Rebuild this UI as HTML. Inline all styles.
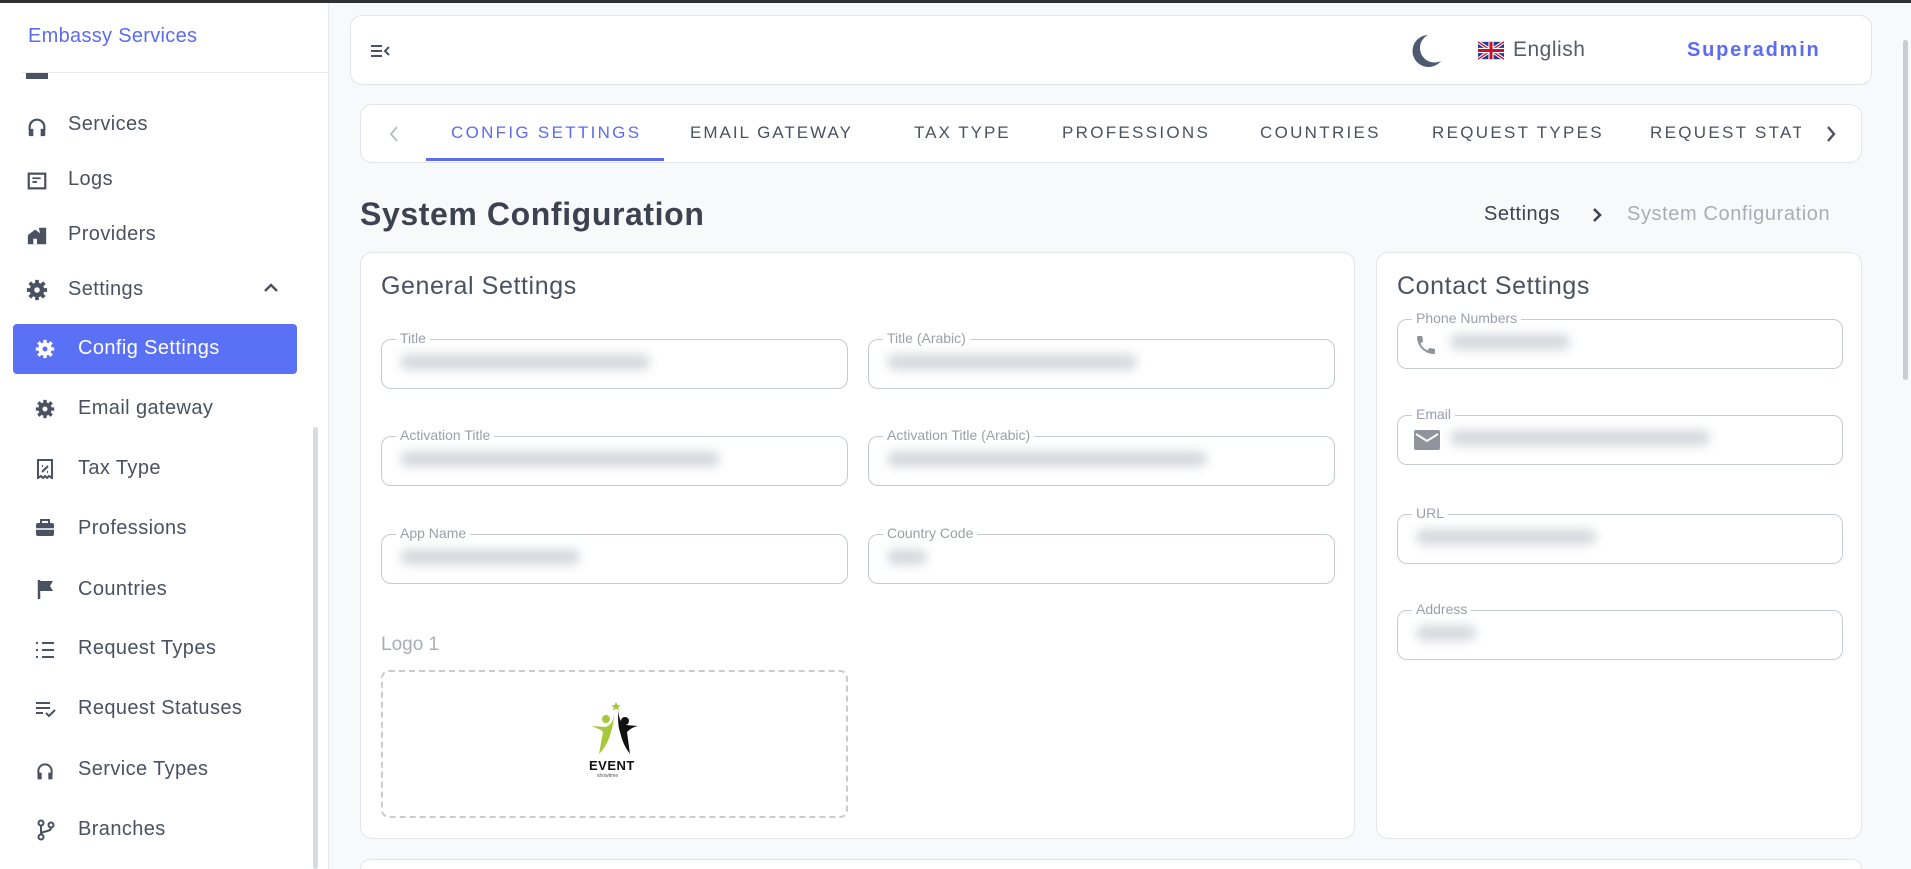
<!DOCTYPE html>
<html><head><meta charset="utf-8"><style>
*{box-sizing:border-box;margin:0;padding:0}
html{overflow:hidden;width:1911px;height:869px}
body{width:1911px;height:869px;overflow:hidden;background:#f8f9fb;font-family:"Liberation Sans",sans-serif;position:relative;color:#4a5160}
.a{position:absolute}
#top{left:0;top:0;width:1911px;height:3px;background:#2f3130}
#side{left:0;top:3px;width:329px;height:866px;background:#fff;border-right:1px solid #e6e8ec;overflow:hidden}
.brand{left:28px;top:24px;font-size:20px;color:#5b6cf0;letter-spacing:.3px}
.sep{left:22px;top:69px;width:306px;height:1px;background:#e6e8ec}
.it{font-size:20px;color:#4a5160;white-space:nowrap;letter-spacing:.4px}
.ic{width:22px;height:22px}
.card{background:#fff;border:1px solid #e3e5ea;border-radius:12px}
.tab{top:123px;font-size:17px;letter-spacing:2px;color:#4a5160;white-space:nowrap}
.fld{border:1px solid #c6cad2;border-radius:10px;height:50px}
.lbl{font-size:14px;color:#9a9fa8;background:#fff;padding:0 4px;top:-10px;left:14px}
.blur{top:14px;left:18px;height:16px;background:#d6d9de;border-radius:8px;filter:blur(5px)}
</style></head><body>
<div class="a" id="top"></div>
<div class="a" id="side">
 <div class="a brand" style="top:22px">Embassy Services</div>
 <div class="a" style="left:0;top:70px;width:329px;height:20px;overflow:hidden">
  <div class="a it" style="left:68px;top:-17px">Users</div>
  <div class="a" style="left:26px;top:-12px;width:22px;height:18px;background:#4a5160"></div>
 </div>
 <div class="a sep"></div>
 <svg class="a ic" style="left:26px;top:113px" viewBox="0 0 24 24"><path d="M4 15v-3a8 8 0 0116 0v3" fill="none" stroke="#4a5160" stroke-width="2.4"/><path d="M3 14h5v8H4a1 1 0 01-1-1zM21 14h-5v8h4a1 1 0 001-1z" fill="#4a5160"/></svg>
 <div class="a it" style="left:68px;top:110px">Services</div>
 <svg class="a ic" style="left:26px;top:167px" viewBox="0 0 24 24"><rect x="3" y="4" width="18" height="16" fill="none" stroke="#4a5160" stroke-width="2.4"/><path d="M7 9h9M7 13h5" stroke="#4a5160" stroke-width="2"/></svg>
 <div class="a it" style="left:68px;top:165px">Logs</div>
 <svg class="a ic" style="left:26px;top:222px" viewBox="0 0 24 24"><path d="M2 11l8-6 8 6v10H2zM14 3h8v18h-4" fill="#4a5160"/><rect x="8" y="15" width="4" height="6" fill="#fff"/></svg>
 <div class="a it" style="left:68px;top:220px">Providers</div>
 <svg class="a ic" style="left:26px;top:276px" viewBox="0 0 24 24"><circle cx="12" cy="12" r="8" fill="#4a5160"/><path d="M12 1v5M12 18v5M1 12h5M18 12h5M4 4l4 4M16 16l4 4M4 20l4-4M16 8l4-4" stroke="#4a5160" stroke-width="4"/><circle cx="12" cy="12" r="3" fill="#fff"/></svg>
 <div class="a it" style="left:68px;top:275px">Settings</div>
 <svg class="a" style="left:263px;top:279px" width="16" height="12" viewBox="0 0 16 12"><path d="M2 9l6-6 6 6" fill="none" stroke="#4a5160" stroke-width="2.4"/></svg>
 <div class="a" style="left:13px;top:321px;width:284px;height:50px;background:#5b71f5;border-radius:4px"></div>
 <svg class="a" style="left:35px;top:336px" width="20" height="20" viewBox="0 0 24 24"><circle cx="12" cy="12" r="8" fill="#fff"/><path d="M12 1v5M12 18v5M1 12h5M18 12h5M4 4l4 4M16 16l4 4M4 20l4-4M16 8l4-4" stroke="#fff" stroke-width="4"/><circle cx="12" cy="12" r="3" fill="#5b71f5"/></svg>
 <div class="a it" style="left:78px;top:334px;color:#fff">Config Settings</div>
 <svg class="a" style="left:35px;top:396px" width="20" height="20" viewBox="0 0 24 24"><circle cx="12" cy="12" r="8" fill="#4a5160"/><path d="M12 1v5M12 18v5M1 12h5M18 12h5M4 4l4 4M16 16l4 4M4 20l4-4M16 8l4-4" stroke="#4a5160" stroke-width="4"/><circle cx="12" cy="12" r="3" fill="#fff"/></svg>
 <div class="a it" style="left:78px;top:394px">Email gateway</div>
 <svg class="a" style="left:36px;top:456px" width="18" height="20" viewBox="0 0 18 20"><path d="M2 1h14v18l-3-2-2 2-2-2-2 2-2-2-3 2z" fill="none" stroke="#4a5160" stroke-width="2"/><path d="M6 13l6-6M6 7h1M11 13h1" stroke="#4a5160" stroke-width="2"/></svg>
 <div class="a it" style="left:78px;top:454px">Tax Type</div>
 <svg class="a" style="left:35px;top:516px" width="20" height="18" viewBox="0 0 20 18"><rect x="1" y="4" width="18" height="13" rx="2" fill="#4a5160"/><rect x="6" y="1" width="8" height="4" fill="none" stroke="#4a5160" stroke-width="2"/><path d="M1 10h18" stroke="#fff" stroke-width="1.5"/></svg>
 <div class="a it" style="left:78px;top:514px">Professions</div>
 <svg class="a" style="left:37px;top:576px" width="18" height="20" viewBox="0 0 18 20"><path d="M2 1v19" stroke="#4a5160" stroke-width="2.5"/><path d="M3 2h13l-3 5 3 5H3z" fill="#4a5160"/></svg>
 <div class="a it" style="left:78px;top:575px">Countries</div>
 <svg class="a" style="left:35px;top:637px" width="20" height="20" viewBox="0 0 20 20"><path d="M7 3h12M7 10h12M7 17h12" stroke="#4a5160" stroke-width="2"/><path d="M1 3h2M1 10h2M1 17h2" stroke="#4a5160" stroke-width="2"/></svg>
 <div class="a it" style="left:78px;top:634px">Request Types</div>
 <svg class="a" style="left:35px;top:697px" width="22" height="18" viewBox="0 0 22 18"><path d="M1 3h14M1 8h14M1 13h7" stroke="#4a5160" stroke-width="2"/><path d="M11 13l3 3 6-6" fill="none" stroke="#4a5160" stroke-width="2"/></svg>
 <div class="a it" style="left:78px;top:694px">Request Statuses</div>
 <svg class="a" style="left:35px;top:758px" width="20" height="20" viewBox="0 0 24 24"><path d="M4 15v-3a8 8 0 0116 0v3" fill="none" stroke="#4a5160" stroke-width="2.4"/><path d="M3 14h5v8H4a1 1 0 01-1-1zM21 14h-5v8h4a1 1 0 001-1z" fill="#4a5160"/></svg>
 <div class="a it" style="left:78px;top:755px">Service Types</div>
 <svg class="a" style="left:37px;top:816px" width="18" height="22" viewBox="0 0 18 22"><circle cx="4" cy="4" r="2.5" fill="none" stroke="#4a5160" stroke-width="2"/><circle cx="4" cy="18" r="2.5" fill="none" stroke="#4a5160" stroke-width="2"/><circle cx="14" cy="6" r="2.5" fill="none" stroke="#4a5160" stroke-width="2"/><path d="M4 7v8M14 9c0 4-10 3-10 6" fill="none" stroke="#4a5160" stroke-width="2"/></svg>
 <div class="a it" style="left:78px;top:815px">Branches</div>
 <div class="a" style="left:313px;top:424px;width:5px;height:442px;background:#d8dbe0;border-radius:3px"></div>
</div>
<div class="a" style="left:1903px;top:40px;width:5px;height:340px;background:#c9ccd2;border-radius:3px"></div>

<div class="a card" style="left:350px;top:15px;width:1522px;height:70px">
 <svg class="a" style="left:19px;top:27px" width="22" height="16" viewBox="0 0 22 16"><path d="M1 3h11M1 8h11M1 13h11" stroke="#4a5160" stroke-width="2"/><path d="M19 4l-4 4 4 4" fill="none" stroke="#4a5160" stroke-width="2"/></svg>
 <svg class="a" style="left:1059px;top:17px" width="34" height="36" viewBox="0 0 34 36"><path d="M18 2A16 16 0 1031 28 13 13 0 0118 2z" fill="#4f5a70"/></svg>
 <svg class="a" style="left:1127px;top:25px" width="26" height="19" viewBox="0 0 60 40"><rect width="60" height="40" fill="#223a8f"/><path d="M0 0L60 40M60 0L0 40" stroke="#fff" stroke-width="8"/><path d="M0 0L60 40M60 0L0 40" stroke="#c8102e" stroke-width="3"/><path d="M30 0v40M0 20h60" stroke="#fff" stroke-width="12"/><path d="M30 0v40M0 20h60" stroke="#c8102e" stroke-width="7"/></svg>
 <div class="a" style="left:1162px;top:22px;font-size:21px;color:#555c6a;letter-spacing:.5px">English</div>
 <div class="a" style="left:1336px;top:23px;font-size:20px;font-weight:bold;color:#5b6cf0;letter-spacing:1.8px">Superadmin</div>
</div>

<div class="a card" style="left:360px;top:104px;width:1502px;height:59px;overflow:hidden">
 <svg class="a" style="left:27px;top:20px" width="12" height="18" viewBox="0 0 12 18"><path d="M9 2L3 9l6 7" fill="none" stroke="#b9bdc5" stroke-width="2"/></svg>
 <div class="a" style="left:65px;top:53px;width:238px;height:3px;background:#5b6cf0"></div>
 <svg class="a" style="left:1464px;top:20px" width="12" height="18" viewBox="0 0 12 18"><path d="M3 2l6 7-6 7" fill="none" stroke="#4a5160" stroke-width="2.4"/></svg>
</div>
<div class="a tab" style="left:451px;color:#5b6cf0;letter-spacing:2.3px">CONFIG SETTINGS</div>
<div class="a tab" style="left:690px">EMAIL GATEWAY</div>
<div class="a tab" style="left:914px">TAX TYPE</div>
<div class="a tab" style="left:1062px;letter-spacing:2.3px">PROFESSIONS</div>
<div class="a tab" style="left:1260px;letter-spacing:2.3px">COUNTRIES</div>
<div class="a tab" style="left:1432px;letter-spacing:2.3px">REQUEST TYPES</div>
<div class="a tab" style="left:1650px;width:151px;overflow:hidden;letter-spacing:2.3px">REQUEST STATUSES</div>

<div class="a" style="left:360px;top:196px;font-size:32px;font-weight:bold;color:#3d4250;letter-spacing:.6px">System Configuration</div>
<div class="a" style="left:1484px;top:203px;font-size:20px;color:#3d4250;letter-spacing:.5px">Settings</div>
<svg class="a" style="left:1591px;top:207px" width="12" height="16" viewBox="0 0 12 16"><path d="M3 2l6 6-6 6" fill="none" stroke="#3d4250" stroke-width="2.6"/></svg>
<div class="a" style="left:1627px;top:203px;font-size:20px;color:#a9adb5;letter-spacing:.6px">System Configuration</div>

<div class="a card" style="left:360px;top:252px;width:995px;height:587px">
 <div class="a" style="left:20px;top:19px;font-size:25px;color:#4a5160;letter-spacing:.6px">General Settings</div>
 <div class="a fld" style="left:20px;top:86px;width:467px"><span class="a lbl">Title</span><div class="a blur" style="width:250px"></div></div>
 <div class="a fld" style="left:507px;top:86px;width:467px"><span class="a lbl">Title (Arabic)</span><div class="a blur" style="width:250px"></div></div>
 <div class="a fld" style="left:20px;top:183px;width:467px"><span class="a lbl">Activation Title</span><div class="a blur" style="width:320px"></div></div>
 <div class="a fld" style="left:507px;top:183px;width:467px"><span class="a lbl">Activation Title (Arabic)</span><div class="a blur" style="width:320px"></div></div>
 <div class="a fld" style="left:20px;top:281px;width:467px"><span class="a lbl">App Name</span><div class="a blur" style="width:180px"></div></div>
 <div class="a fld" style="left:507px;top:281px;width:467px"><span class="a lbl">Country Code</span><div class="a blur" style="width:40px"></div></div>
 <div class="a" style="left:20px;top:381px;font-size:19px;color:#a9adb5">Logo 1</div>
 <div class="a" style="left:20px;top:417px;width:467px;height:148px;border:2px dashed #c8cbd0;border-radius:8px">
  <svg class="a" style="left:207px;top:30px" width="52" height="56" viewBox="0 0 52 56"><path d="M26 0l1.5 3 3 .3-2.3 2 .7 3-2.9-1.6-2.9 1.6.7-3-2.3-2 3-.3z" fill="#a6c93a"/><circle cx="16" cy="17" r="4" fill="#a6c93a"/><path d="M24 8c0 10-2 14-8 17L2 24c5 3 9 3 11 6l-4 22c6-6 10-14 12-22 2-6 3-12 3-22z" fill="#a6c93a"/><circle cx="35" cy="19" r="4" fill="#111"/><path d="M28 8c0 10 0 16 2 22 2 8 4 14 10 22l-3-22c3-3 6-5 11-6l-12-1c-5-2-7-6-8-15z" fill="#111"/></svg>
  <div class="a" style="left:206px;top:86px;font-size:13px;font-weight:bold;color:#111;letter-spacing:.5px">EVENT</div>
  <div class="a" style="left:214px;top:101px;font-size:5px;color:#555">showtime</div>
 </div>
</div>

<div class="a card" style="left:1376px;top:252px;width:486px;height:587px">
 <div class="a" style="left:20px;top:19px;font-size:25px;color:#4a5160;letter-spacing:.6px">Contact Settings</div>
 <div class="a fld" style="left:20px;top:66px;width:446px"><span class="a lbl">Phone Numbers</span>
  <svg class="a" style="left:16px;top:13px" width="24" height="24" viewBox="0 0 24 24"><path d="M6.6 10.8a15 15 0 006.6 6.6l2.2-2.2c.3-.3.7-.4 1-.2 1.1.4 2.3.6 3.6.6.6 0 1 .4 1 1V20c0 .6-.4 1-1 1A17 17 0 013 4c0-.6.4-1 1-1h3.5c.6 0 1 .4 1 1 0 1.3.2 2.5.6 3.6.1.3 0 .7-.2 1z" fill="#8e939c"/></svg>
  <div class="a blur" style="left:52px;width:120px"></div></div>
 <div class="a fld" style="left:20px;top:162px;width:446px"><span class="a lbl">Email</span>
  <svg class="a" style="left:16px;top:14px" width="26" height="22" viewBox="0 0 26 22"><rect x="0" y="0" width="26" height="20" rx="2" fill="#8e939c"/><path d="M2 4l11 7 11-7" fill="none" stroke="#fff" stroke-width="2"/></svg>
  <div class="a blur" style="left:52px;width:260px"></div></div>
 <div class="a fld" style="left:20px;top:261px;width:446px"><span class="a lbl">URL</span><div class="a blur" style="width:180px"></div></div>
 <div class="a fld" style="left:20px;top:357px;width:446px"><span class="a lbl">Address</span><div class="a blur" style="width:60px"></div></div>
</div>

<div class="a card" style="left:360px;top:859px;width:1502px;height:10px;border-bottom:none;border-radius:12px 12px 0 0"></div>
</body></html>
